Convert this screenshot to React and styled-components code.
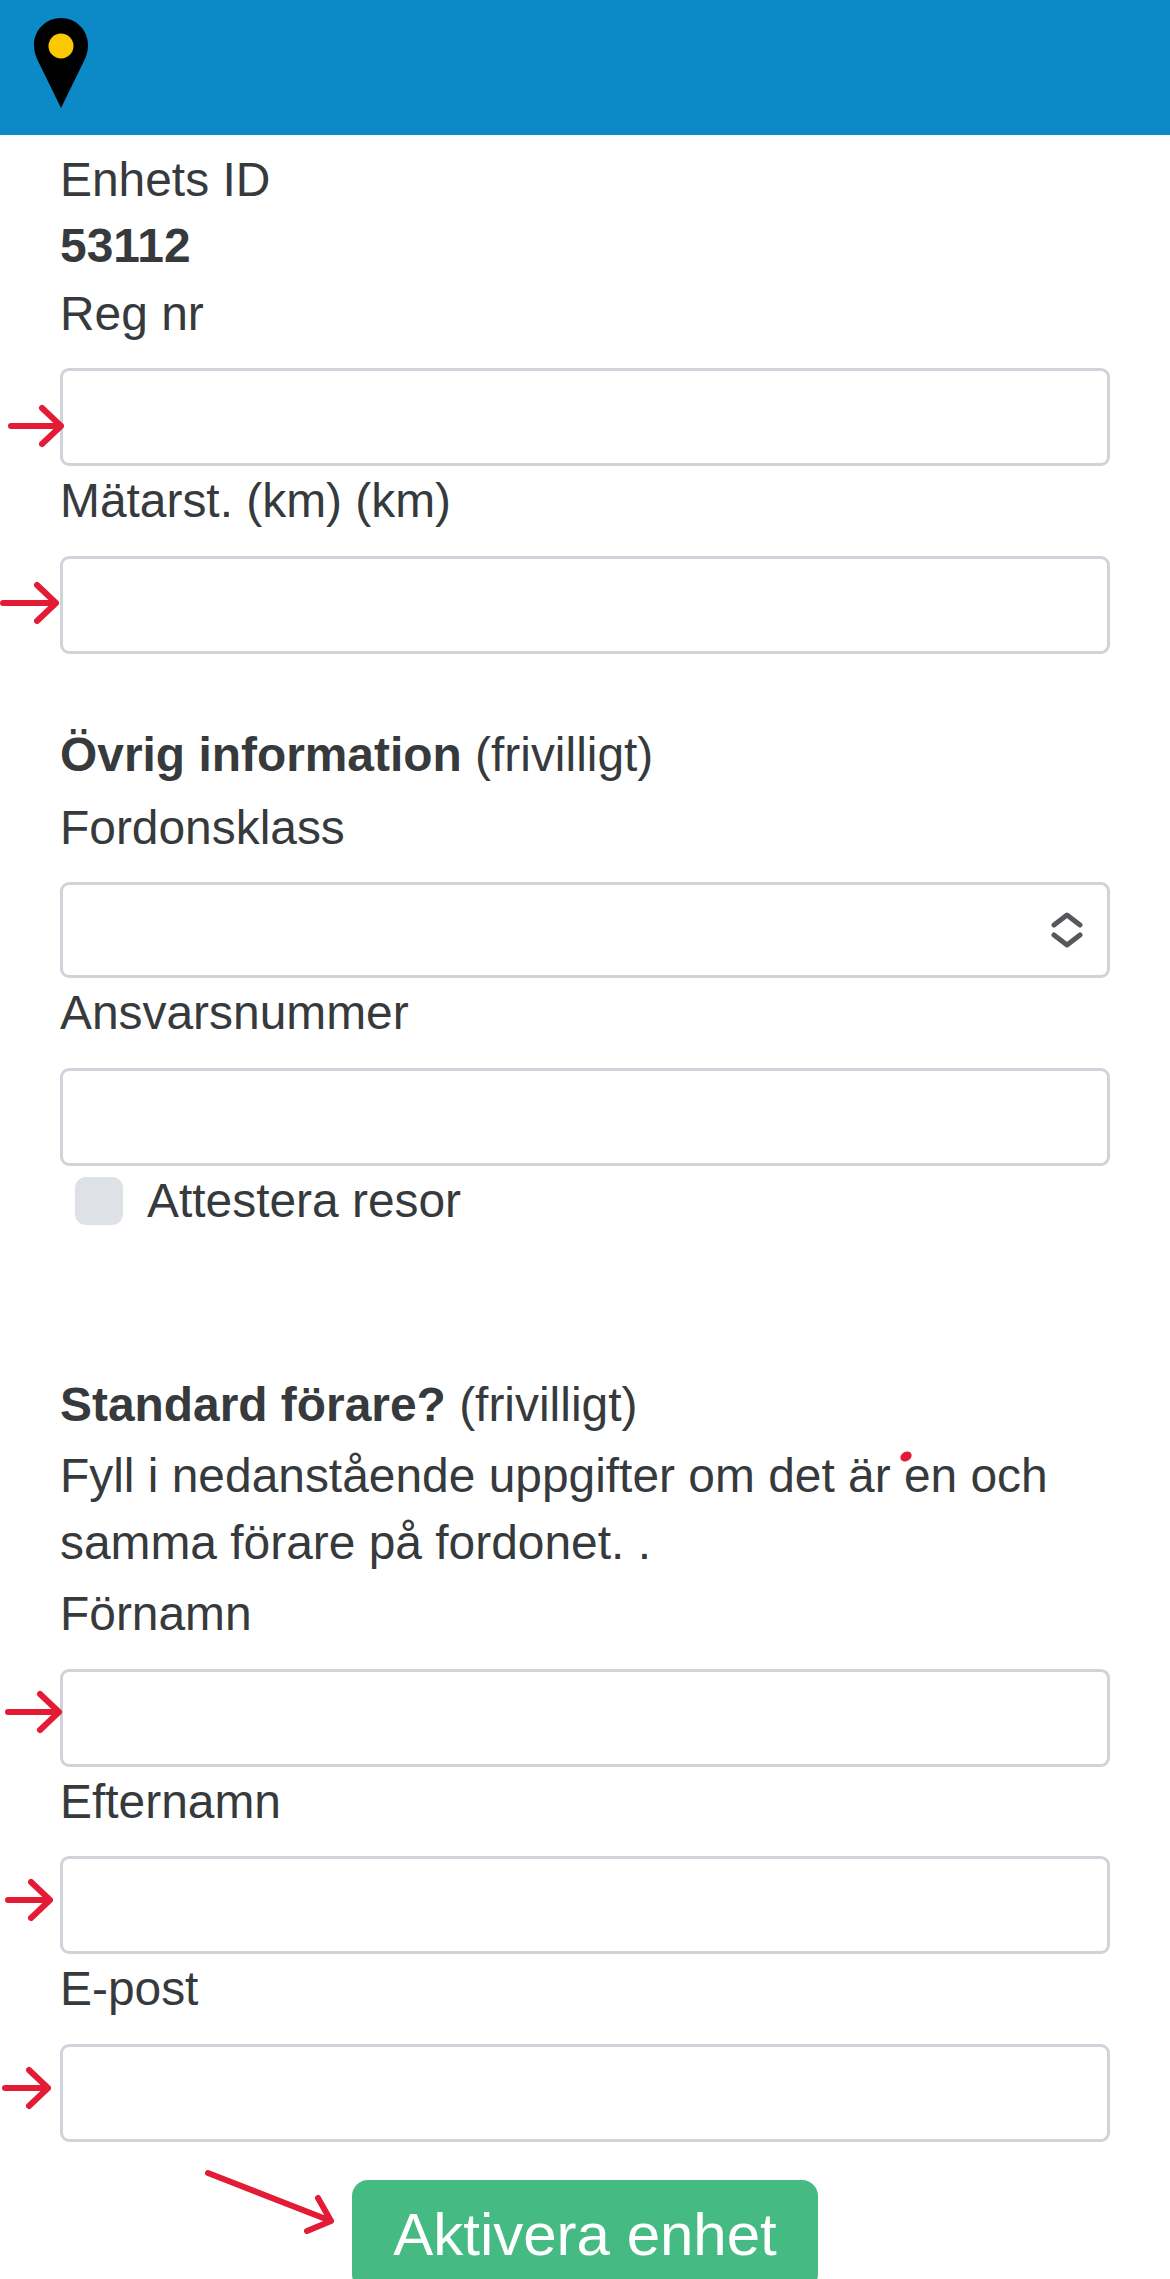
import React from "react"
import styled, { createGlobalStyle } from "styled-components"

const GlobalStyle = createGlobalStyle`
  html, body {
    margin: 0;
    padding: 0;
    background: #fff;
    font-family: "Liberation Sans", Arial, sans-serif;
    color: #373a3c;
  }
  * {
    box-sizing: border-box;
  }
`

const Page = styled.div`
  position: relative;
  width: 1170px;
  height: 2279px;
  overflow: hidden;
`

const Header = styled.header`
  height: 135px;
  background: #0b8ac7;
  padding: 18px 0 0 34px;
`

const Form = styled.form`
  padding: 11.5px 60px 0;
  font-size: 47.9px;
  line-height: 66.5px;
`

const Line = styled.div`
  height: 66px;
`

const Label = styled.label`
  display: block;
  height: 67.5px;
  margin-bottom: 22px;
  line-height: 69px;
`

const Field = styled.div`
  position: relative;
  height: 98px;
`

const Input = styled.input`
  display: block;
  width: 100%;
  height: 100%;
  border: 3px solid #ced4da;
  border-radius: 9px;
  background: #fff;
`

const SelectBox = styled.div`
  display: flex;
  align-items: center;
  justify-content: flex-end;
  height: 96px;
  padding-right: 24px;
  border: 3px solid #ced4da;
  border-radius: 9px;
`

const Section = styled.h2`
  margin: ${(p) => p.$top}px 0 ${(p) => p.$bottom}px;
  font-size: 47.9px;
  line-height: 66px;
  font-weight: 700;

  span {
    font-weight: 400;
  }
`

const CheckRow = styled.div`
  display: flex;
  align-items: center;
  height: 71.5px;
  padding-left: 15px;
`

const Check = styled.span`
  width: 48px;
  height: 48px;
  margin-right: 24px;
  border-radius: 11px;
  background: #dee2e6;
`

const Help = styled.p`
  position: relative;
  margin: 0 0 3px;
`

const Dot = styled.i`
  position: absolute;
  left: 840px;
  top: 9px;
  width: 12px;
  height: 9px;
  border-radius: 50%;
  background: #e31b35;
  transform: rotate(-30deg);
`

const ButtonRow = styled.div`
  display: flex;
  justify-content: center;
  margin-top: 38px;
`

const Button = styled.button`
  width: 466px;
  height: 110px;
  border: 0;
  border-radius: 16px;
  background: #45bb83;
  color: #fff;
  font-family: inherit;
  font-size: 60px;
  line-height: 1;
`

const Mark = styled.svg`
  position: absolute;
  left: ${(p) => p.$left}px;
  top: ${(p) => p.$top}px;
  fill: none;
  stroke: #e31b35;
  stroke-width: 6;
  stroke-linecap: round;
  stroke-linejoin: round;
`

// from / to are relative to the field's left edge, y to its top edge
const Arrow = ({ from, to, y }) => {
  const len = to - from
  return (
    <Mark $left={from - 3} $top={y - 22} width={len + 6} height="44" viewBox={`0 0 ${len + 6} 44`}>
      <path d={`M3 22H${len + 3}M${len - 16} 4L${len + 3} 22L${len - 16} 40`} />
    </Mark>
  )
}

const Pin = () => (
  <svg width="54" height="90" viewBox="0 0 54 90">
    <path d="M27 0C12 0 0 12 0 27C0 34 2 39 5 45L27 90L49 45C52 39 54 34 54 27C54 12 42 0 27 0Z" fill="#000" />
    <circle cx="27" cy="28" r="12.5" fill="#fbc900" />
  </svg>
)

const Chevrons = () => (
  <svg width="32" height="36" viewBox="0 0 32 36" fill="none" stroke="#55595c" strokeWidth="5" strokeLinecap="round" strokeLinejoin="round">
    <path d="M3 13L16 3L29 13M3 23L16 33L29 23" />
  </svg>
)

export default function App() {
  return (
    <Page>
      <GlobalStyle />
      <Header>
        <Pin />
      </Header>
      <Form>
        <Line>Enhets ID</Line>
        <Line>
          <strong>53112</strong>
        </Line>
        <Label>Reg nr</Label>
        <Field>
          <Input />
          <Arrow from={-49} to={1} y={58} />
        </Field>
        <Label>Mätarst. (km) (km)</Label>
        <Field>
          <Input />
          <Arrow from={-57} to={-4} y={47} />
        </Field>
        <Section $top={68} $bottom={5}>
          Övrig information <span>(frivilligt)</span>
        </Section>
        <Label>Fordonsklass</Label>
        <SelectBox>
          <Chevrons />
        </SelectBox>
        <Label>Ansvarsnummer</Label>
        <Field>
          <Input />
        </Field>
        <CheckRow>
          <Check />
          Attestera resor
        </CheckRow>
        <Section $top={135} $bottom={5}>
          Standard förare? <span>(frivilligt)</span>
        </Section>
        <Help>
          Fyll i nedanstående uppgifter om det är en och samma förare på fordonet. .
          <Dot />
        </Help>
        <Label>Förnamn</Label>
        <Field>
          <Input />
          <Arrow from={-52} to={-1} y={43} />
        </Field>
        <Label>Efternamn</Label>
        <Field>
          <Input />
          <Arrow from={-52} to={-10} y={44} />
        </Field>
        <Label>E-post</Label>
        <Field>
          <Input />
          <Arrow from={-55} to={-12} y={44} />
        </Field>
        <ButtonRow>
          <Button type="button">Aktivera enhet</Button>
        </ButtonRow>
      </Form>
      <Mark $left={200} $top={2165} width="140" height="70" viewBox="0 0 140 70">
        <path d="M8 8L131 56M107 66L131 56L118 33" />
      </Mark>
    </Page>
  )
}
